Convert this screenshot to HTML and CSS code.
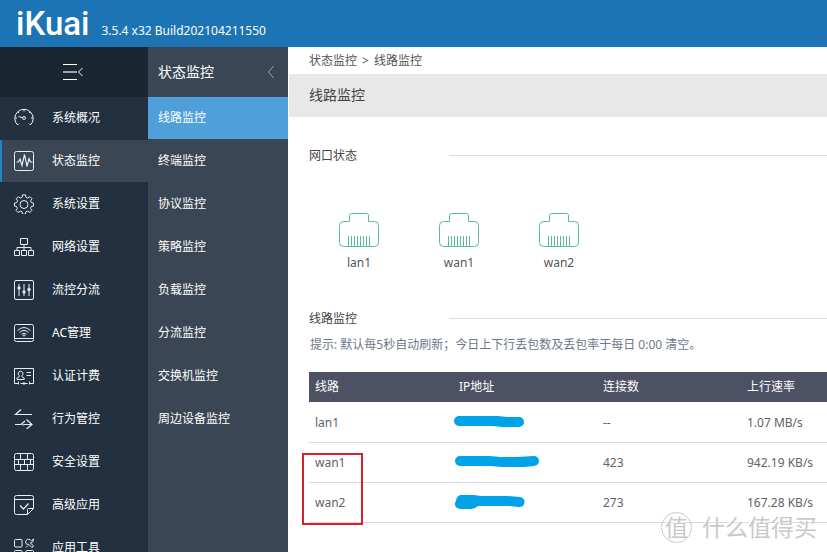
FILE: index.html
```html
<!DOCTYPE html>
<html lang="zh-CN">
<head>
<meta charset="utf-8">
<title>iKuai 线路监控</title>
<link rel="stylesheet" href="styles.css">
</head>
<body>
<header class="topbar">
  <span class="logo">iKuai</span>
  <span class="version">3.5.4 x32 Build202104211550</span>
</header>
<div class="shell">
  <nav class="sidebar">
    <button class="toggle" type="button" aria-label="收起菜单">
      <svg width="22" height="18" viewBox="0 0 22 18" fill="none" stroke="#fff"><path d="M0 1.500h14M0 16.500h14"/><path d="M0 9h14" stroke="#9aa3ad" stroke-width="2"/><path d="M19.500 5l-4 4 4 4"/></svg>
    </button>
    <a class="item" href="#"><svg class="icon" viewBox="0 0 20 20"><path d="M5 15.500l-1.500 1.500A9.200 9.200 0 1 1 16.500 17L15 15.500M10 1v2.500M3.800 3.800l1.300 1.300M16.200 3.800l-1.300 1.300M1 10h2M17 10h2M4.500 8.500l4.200 1.200"/><circle cx="10" cy="10" r="1.500"/></svg>系统概况</a>
    <a class="item active" href="#"><svg class="icon" viewBox="0 0 20 20"><rect x=".5" y=".5" width="19" height="19" rx="2"/><path d="M2.500 11h2l1.500-3 2 6.500 2.500-11 2.500 12 2-8 1.500 3.500h2" stroke-width="1.200"/></svg>状态监控</a>
    <a class="item" href="#"><svg class="icon" viewBox="0 0 20 20"><path d="M8.500.8h3l.5 2.500 1.800.8 2.200-1.400 2 2-1.400 2.200.7 1.700 2.300.5v2.900l-2.400.5-.7 1.800 1.400 2.100-2 2.100-2.200-1.400-1.800.7-.5 2.400h-2.900l-.5-2.400-1.800-.7-2.100 1.400-2.100-2.100 1.400-2.100-.7-1.800L.5 12V9.100l2.300-.5.8-1.800-1.400-2.100 2-2 2.200 1.400 1.700-.8z"/><circle cx="10" cy="10.500" r="4"/></svg>系统设置</a>
    <a class="item" href="#"><svg class="icon" viewBox="0 0 20 20"><path d="M6.500 1.500h7v6h-7zM.5 13.500h5v5h-5zM7.500 13.500h5v5h-5zM14.500 13.500h5v5h-5zM10 7.500v6M3 13.500v-3h14v3"/></svg>网络设置</a>
    <a class="item" href="#"><svg class="icon" viewBox="0 0 20 20"><rect x=".5" y=".5" width="19" height="19" rx="1.500"/><path d="M5 4v12M10 4v12M15 4v12"/><g fill="#dfe6ec" stroke="none"><circle cx="5" cy="8" r="1.700"/><circle cx="10" cy="12" r="1.700"/><circle cx="15" cy="9.500" r="1.700"/></g></svg>流控分流</a>
    <a class="item" href="#"><svg class="icon" viewBox="0 0 20 20"><rect x=".5" y="1.500" width="19" height="17" rx="2"/><path d="M.5 15.500h19M3.500 7.500q6.500-6 13 0M5.500 9.500q4.500-4.200 9 0M7.500 11.300q2.500-2.200 5 0"/><circle cx="10" cy="12.500" r=".7"/></svg>AC管理</a>
    <a class="item" href="#"><svg class="icon" viewBox="0 0 20 20"><path d="M4 17.500H.5v-15h19v15H16M6.500 17.500h7M4.500 15.500v3M10 16v3M15.500 15.500v3M12.500 6.500h4.500M12.500 9.500h4.500"/><path d="M3 13.500v-1.500l2.300-1.300v-1a2.400 2.400 0 1 1 2.600 0v1l2.300 1.300v1.500z"/></svg>认证计费</a>
    <a class="item" href="#"><svg class="icon" viewBox="0 0 20 20"><path d="M7 .5L1.500 5.500H18M1 15.500h6l4-3.500M8 16l3-.5h7M12.500 10.500l5.500 5-5.500 4.500" stroke-width="1.200"/></svg>行为管控</a>
    <a class="item" href="#"><svg class="icon" viewBox="0 0 20 20"><rect x=".5" y="1.500" width="19" height="17" rx="2"/><path d="M.5 7.500h19M.5 12.500h19M6.500 1.500v6M13.500 1.500v6M10.500 7.500v5M4.500 7.500v5M16.500 7.500v5M6.500 12.500v6M13.500 12.500v6"/></svg>安全设置</a>
    <a class="item" href="#"><svg class="icon" viewBox="0 0 20 20"><path d="M13.500 19.500h-11a2 2 0 0 1-2-2v-15a2 2 0 0 1 2-2h15a2 2 0 0 1 2 2v11zM13.500 19.500v-5a1 1 0 0 1 1-1h5M.5 4.500h19"/><path d="M6 10.500l3.500 3.500 5-5.500" stroke-width="1.300"/></svg>高级应用</a>
    <a class="item" href="#"><svg class="icon" viewBox="0 0 20 20"><rect x=".5" y="1.500" width="7.500" height="7.500" rx="1"/><rect x=".5" y="12.500" width="7.500" height="7" rx="1"/><rect x="12" y="12.500" width="7.500" height="7" rx="1"/><path d="M13.500 1.200q-3 1.500-1.500 4.300 1 1.200 2.800.8l3 3.200q1.500-.2 1.500-1.800l-3-2.700q3.500-.5 3.200-4l-2.200 1.800-1.300-1.300zM12 9.500l2-2"/></svg>应用工具</a>
  </nav>
  <nav class="submenu">
    <div class="subhead"><span>状态监控</span><svg width="8" height="14" viewBox="0 0 8 14" fill="none" stroke="#a3abb4"><path d="M6.500 1L1.500 7l5 6"/></svg></div>
    <a class="subitem current" href="#">线路监控</a>
    <a class="subitem" href="#">终端监控</a>
    <a class="subitem" href="#">协议监控</a>
    <a class="subitem" href="#">策略监控</a>
    <a class="subitem" href="#">负载监控</a>
    <a class="subitem" href="#">分流监控</a>
    <a class="subitem" href="#">交换机监控</a>
    <a class="subitem" href="#">周边设备监控</a>
  </nav>
  <main class="content">
    <div class="crumbs"><span>状态监控</span><span>&gt;</span><span>线路监控</span></div>
    <h1 class="title">线路监控</h1>
    <section class="ports-section">
      <h2 class="legend">网口状态</h2>
      <div class="ports">
        <div class="port"><svg class="jack" viewBox="0 0 40 34"><path d="M10.500 8.500v-6q0-2 2-2h15q2 0 2 2v6h6q4 0 4 4v17q0 4-4 4h-31q-4 0-4-4v-17q0-4 4-4zM9.500 23v10M12.500 23v10M15.500 23v10M18.500 23v10M21.500 23v10M24.500 23v10M27.500 23v10M30.500 23v10"/></svg>lan1</div>
        <div class="port"><svg class="jack" viewBox="0 0 40 34"><path d="M10.500 8.500v-6q0-2 2-2h15q2 0 2 2v6h6q4 0 4 4v17q0 4-4 4h-31q-4 0-4-4v-17q0-4 4-4zM9.500 23v10M12.500 23v10M15.500 23v10M18.500 23v10M21.500 23v10M24.500 23v10M27.500 23v10M30.500 23v10"/></svg>wan1</div>
        <div class="port"><svg class="jack" viewBox="0 0 40 34"><path d="M10.500 8.500v-6q0-2 2-2h15q2 0 2 2v6h6q4 0 4 4v17q0 4-4 4h-31q-4 0-4-4v-17q0-4 4-4zM9.500 23v10M12.500 23v10M15.500 23v10M18.500 23v10M21.500 23v10M24.500 23v10M27.500 23v10M30.500 23v10"/></svg>wan2</div>
      </div>
    </section>
    <section class="lines-section">
      <h2 class="legend">线路监控</h2>
      <p class="hint">提示: 默认每5秒自动刷新；今日上下行丢包数及丢包率于每日 0:00 清空。</p>
      <table class="lines">
        <thead><tr><th>线路</th><th>IP地址</th><th>连接数</th><th>上行速率</th></tr></thead>
        <tbody>
          <tr><td>lan1</td><td><svg class="mask" viewBox="0 0 86 16"><path d="M5 1h39l9 1h12a5 5 0 0 1 0 10H48l-9-1H5a5 5 0 0 1 0-10z"/></svg></td><td>--</td><td>1.07 MB/s</td></tr>
          <tr><td>wan1</td><td><svg class="mask" viewBox="0 0 86 16"><path d="M6 1h29l12 1h16l17-1a5 5 0 0 1 0 10l-10 1H48l-12-1H6A5 5 0 0 1 6 1z"/></svg></td><td>423</td><td>942.19 KB/s</td></tr>
          <tr><td>wan2</td><td><svg class="mask" viewBox="0 0 86 16"><path d="M6 0h14l7 1h26l13 1a5 5 0 0 1-1 10l-10-1H24q-3 3-7 3H6a5 5 0 0 1-4-8q0-4 4-6z"/></svg></td><td>273</td><td>167.28 KB/s</td></tr>
        </tbody>
      </table>
      <div class="marker"></div>
    </section>
  </main>
</div>
<div class="watermark"><span class="seal">值</span><span>什么值得买</span></div>
</body>
</html>
```
FILE: styles.css
```css
* { box-sizing: border-box; }
body {
  margin: 0;
  height: 100vh;
  overflow: hidden;
  display: flex;
  flex-direction: column;
  font: 12px/18px "Noto Sans", "Noto Sans CJK SC", sans-serif;
  color: #444;
  background: #fff;
}
a { color: inherit; text-decoration: none; }
h1, h2, p { margin: 0; font-weight: 400; }

.topbar {
  flex: none;
  display: flex;
  align-items: center;
  gap: 12px;
  height: 47px;
  padding-left: 16px;
  background: #1c74b4;
  color: #fff;
}
.logo { font: 500 33px/47px Roboto, sans-serif; }
.version { padding-top: 14px; }

.shell { flex: 1; min-height: 0; display: flex; }
.sidebar {
  flex: none;
  width: 148px;
  overflow: hidden;
  background: #223040;
  color: #fff;
}
.toggle {
  display: flex;
  align-items: center;
  justify-content: center;
  width: 100%;
  height: 50px;
  padding: 0;
  border: 0;
  background: #1b2633;
}
.item {
  display: flex;
  align-items: center;
  gap: 18px;
  height: 42px;
  margin-bottom: 1px;
  padding-left: 14px;
}
.item.active {
  padding-left: 12px;
  border-left: 2px solid #2084cb;
  background: #3b4654;
}
.icon {
  flex: none;
  width: 20px;
  height: 20px;
  fill: none;
  stroke: #e8eef3;
}

.submenu {
  flex: none;
  width: 140px;
  background: #3b4654;
  color: #fff;
}
.subhead {
  display: flex;
  align-items: center;
  justify-content: space-between;
  height: 50px;
  padding: 0 13px 0 10px;
  font-size: 14px;
}
.subitem {
  display: flex;
  align-items: center;
  height: 42px;
  margin-bottom: 1px;
  padding-left: 10px;
}
.subitem.current { background: #4f9fda; }

.content { flex: 1; min-width: 0; overflow: hidden; margin-left: 1px; }
.crumbs {
  display: flex;
  gap: 5px;
  height: 27px;
  padding-left: 20px;
  line-height: 28px;
  color: #555;
}
.title {
  height: 43px;
  padding-left: 20px;
  background: #e8e8e8;
  font-size: 14px;
  line-height: 42px;
}
.ports-section { padding: 30px 0 0 20px; }
.lines-section { position: relative; padding: 38px 0 0 20px; }
.legend {
  display: grid;
  grid-template-columns: 140px 1fr;
  align-items: center;
  font-size: 12px;
  line-height: 18px;
}
.legend::after { content: ""; height: 1px; margin-bottom: 2px; background: #ddd; }
.ports { display: flex; padding-top: 48px; }
.port {
  width: 100px;
  display: flex;
  flex-direction: column;
  align-items: center;
  gap: 7px;
  color: #555;
}
.jack { width: 40px; height: 34px; fill: none; stroke: #57bb9d; }
.hint { padding: 8px 0 0 1px; color: #6c788c; }
.lines {
  width: 576px;
  margin-top: 18px;
  table-layout: fixed;
  border-collapse: collapse;
}
.lines th {
  height: 30px;
  padding: 0 6px;
  background: #4c5264;
  color: #fff;
  font-weight: 400;
  text-align: left;
}
.lines td {
  height: 40px;
  padding: 2px 6px 0;
  border-bottom: 1px solid #d9d9d9;
  color: #606266;
}
.mask { display: block; width: 86px; height: 16px; margin-left: -5px; fill: #00a2e8; }
.marker {
  position: absolute;
  left: 13px;
  bottom: -2px;
  width: 61px;
  height: 72px;
  border: 2px solid #d2232f;
}
.watermark {
  position: absolute;
  right: 10px;
  bottom: 9px;
  display: flex;
  align-items: center;
  gap: 10px;
  font-size: 23px;
  line-height: 32px;
  color: #c9c9c9;
  text-shadow: -1px -1px #fff;
}
.seal {
  width: 31px;
  height: 31px;
  border: 1px solid #c9c9c9;
  border-radius: 50%;
  line-height: 28px;
  text-align: center;
}
```
